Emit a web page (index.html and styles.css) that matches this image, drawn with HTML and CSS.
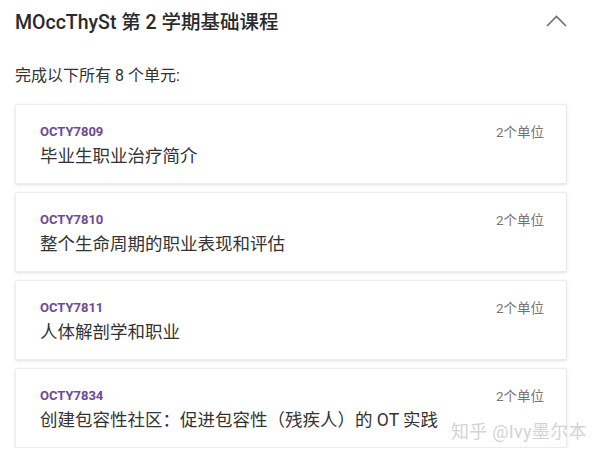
FILE: index.html
```html
<!DOCTYPE html>
<html lang="zh">
<head>
  <meta charset="UTF-8">
  <title>MOccThySt 第 2 学期基础课程</title>
  <link rel="stylesheet" href="styles.css">
</head>
<body>
<div class="section">
  <div class="section-header">
    <h2>MOccThySt 第 2 学期基础课程</h2>
    <svg class="chevron" width="21" height="12" viewBox="0 0 21 12">
      <polyline points="1,11 10.5,1.5 20,11" fill="none" stroke="#6f6a86" stroke-width="1.6"/>
    </svg>
  </div>
  <p class="intro">完成以下所有 8 个单元:</p>

  <div class="units">
    <div class="unit">
      <div class="unit-info">
        <div class="code">OCTY7809</div>
        <div class="name">毕业生职业治疗简介</div>
      </div>
      <div class="credits">2个单位</div>
    </div>
    <div class="unit">
      <div class="unit-info">
        <div class="code">OCTY7810</div>
        <div class="name">整个生命周期的职业表现和评估</div>
      </div>
      <div class="credits">2个单位</div>
    </div>
    <div class="unit">
      <div class="unit-info">
        <div class="code">OCTY7811</div>
        <div class="name">人体解剖学和职业</div>
      </div>
      <div class="credits">2个单位</div>
    </div>
    <div class="unit">
      <div class="unit-info">
        <div class="code">OCTY7834</div>
        <div class="name">创建包容性社区：促进包容性（残疾人）的 OT 实践</div>
      </div>
      <div class="credits">2个单位</div>
    </div>
  </div>
</div>
<div class="watermark">知乎 @Ivy墨尔本</div>
</body>
</html>
```

FILE: styles.css
```css
body {
  margin: 0;
  background-color: #fff;
  font-family: 'Roboto', 'Noto Sans CJK SC', sans-serif;
  color: #333;
}
.section {
  padding: 0 33px 0 15px;
}
.section-header {
  display: flex;
  justify-content: space-between;
  align-items: center;
  height: 40px;
}
.section-header h2 {
  margin: 0;
  font-size: 19.5px;
  font-weight: 500;
  color: #2a2a2a;
}
.chevron {
  margin-top: 1px;
}
.intro {
  margin: 24px 0 16px;
  font-size: 16px;
  color: #333;
  line-height: 24px;
}
.units {
  display: flex;
  flex-direction: column;
  gap: 8px;
}
.unit {
  display: flex;
  justify-content: space-between;
  align-items: flex-start;
  height: 80px;
  box-sizing: border-box;
  padding: 17px 22px 0 24px;
  background-color: #fff;
  border: 1px solid #ececec;
  border-radius: 2px;
  box-shadow: 0 1px 3px rgba(0, 0, 0, 0.12);
}
.code {
  font-size: 13px;
  font-weight: 700;
  color: #6a4a96;
  line-height: 20px;
}
.name {
  font-size: 17.5px;
  color: #333;
  line-height: 28px;
}
.credits {
  font-size: 13.5px;
  color: #757575;
  line-height: 20px;
}
.watermark {
  position: absolute;
  left: 451px;
  top: 417px;
  font-size: 18px;
  color: #d4d4d4;
  letter-spacing: 0.3px;
}
```
